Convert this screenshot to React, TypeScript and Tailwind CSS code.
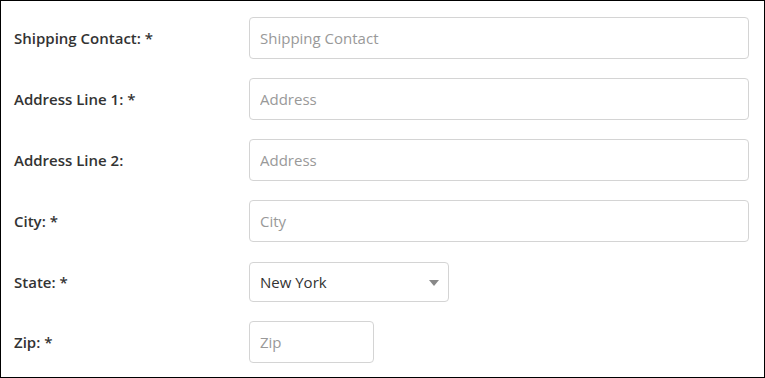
import React from "react";

const font = { fontFamily: '"Open Sans", "Liberation Sans", sans-serif' };

function Row({ label, children, mb = "mb-[19px]" }: { label: string; children: React.ReactNode; mb?: string }) {
  return (
    <div className={`flex items-center ${mb}`}>
      <div className="w-[235px] shrink-0 text-[15px] font-semibold text-[#333]">{label}</div>
      {children}
    </div>
  );
}

function Input({ placeholder, w = "w-[500px]" }: { placeholder: string; w?: string }) {
  return (
    <input
      placeholder={placeholder}
      className={`${w} h-[42px] rounded-[4px] border border-[#d4d4d4] bg-white px-[10px] text-[15px] text-[#333] placeholder:text-[#999] outline-none`}
      style={font}
    />
  );
}

export default function App() {
  return (
    <div className="w-[765px] h-[378px] border border-black bg-white overflow-hidden" style={font}>
      <div className="pl-[13px] pt-[16px]">
        <Row label="Shipping Contact: *">
          <Input placeholder="Shipping Contact" />
        </Row>
        <Row label="Address Line 1: *">
          <Input placeholder="Address" />
        </Row>
        <Row label="Address Line 2:">
          <Input placeholder="Address" />
        </Row>
        <Row label="City: *" mb="mb-[20px]">
          <Input placeholder="City" />
        </Row>
        <Row label="State: *">
          <div className="relative w-[200px] h-[40px] rounded-[4px] border border-[#d4d4d4] bg-white flex items-center px-[10px] text-[15px] text-[#333]">
            New York
            <svg className="absolute right-[9px] top-[17px]" width="10" height="6" viewBox="0 0 10 6">
              <path d="M0 0 L10 0 L5 6 Z" fill="#888" />
            </svg>
          </div>
        </Row>
        <Row label="Zip: *" mb="">
          <Input placeholder="Zip" w="w-[125px]" />
        </Row>
      </div>
    </div>
  );
}
